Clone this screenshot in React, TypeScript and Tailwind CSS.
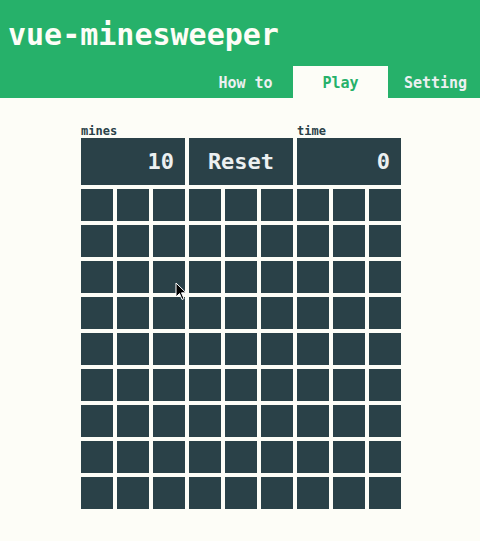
import React from 'react'

const mono = { fontFamily: '"DejaVu Sans Mono", "Liberation Mono", monospace' }

const tabs = ['How to', 'Play', 'Setting']

export default function App() {
  const cells = Array.from({ length: 81 }, (_, i) => i)

  return (
    <div className="relative min-h-screen bg-[#fdfdf7] overflow-hidden" style={mono}>
      {/* Header */}
      <header className="bg-[#26b16a] h-[98px] flex flex-col overflow-hidden">
        <h1 className="pl-2 pt-[15px] text-[30px] leading-[40px] font-bold text-[#fdfdf7]">
          vue-minesweeper
        </h1>
        <nav className="mt-auto flex pl-[198px]">
          {tabs.map((tab) => (
            <div
              key={tab}
              className={`shrink-0 w-[95px] h-8 flex items-center justify-center pt-[2px] text-[15px] font-bold ${
                tab === 'Play' ? 'bg-[#fdfdf7] text-[#26b16a]' : 'text-[#ecf0f1]'
              }`}
            >
              {tab}
            </div>
          ))}
        </nav>
      </header>

      {/* Board */}
      <main className="w-[320px] ml-[81px] pt-[26px]">
        <div className="grid grid-cols-3 gap-1 text-[12px] leading-[14px] font-bold text-[#2a4148]">
          <span>mines</span>
          <span />
          <span>time</span>
        </div>
        <div className="grid grid-cols-3 gap-1">
          <div className="h-[47px] bg-[#2a4148] flex items-center justify-end pr-[11px] text-[22px] font-bold text-[#ecf0f1]">
            10
          </div>
          <button className="h-[47px] bg-[#2a4148] flex items-center justify-center text-[22px] font-bold text-[#ecf0f1]">
            Reset
          </button>
          <div className="h-[47px] bg-[#2a4148] flex items-center justify-end pr-[11px] text-[22px] font-bold text-[#ecf0f1]">
            0
          </div>
        </div>
        <div className="mt-1 grid grid-cols-9 gap-1">
          {cells.map((c) => (
            <div key={c} className="h-8 bg-[#2a4148]" />
          ))}
        </div>
      </main>

      {/* Mouse cursor */}
      <svg className="absolute left-[175px] top-[282px]" width="12" height="19" viewBox="0 0 12 19">
        <path d="M1 1 L1 15 L4.5 11.5 L7 17.5 L9 16.5 L6.5 10.8 L11 10.8 Z" fill="#000" stroke="#fff" strokeWidth="1" />
      </svg>
    </div>
  )
}
